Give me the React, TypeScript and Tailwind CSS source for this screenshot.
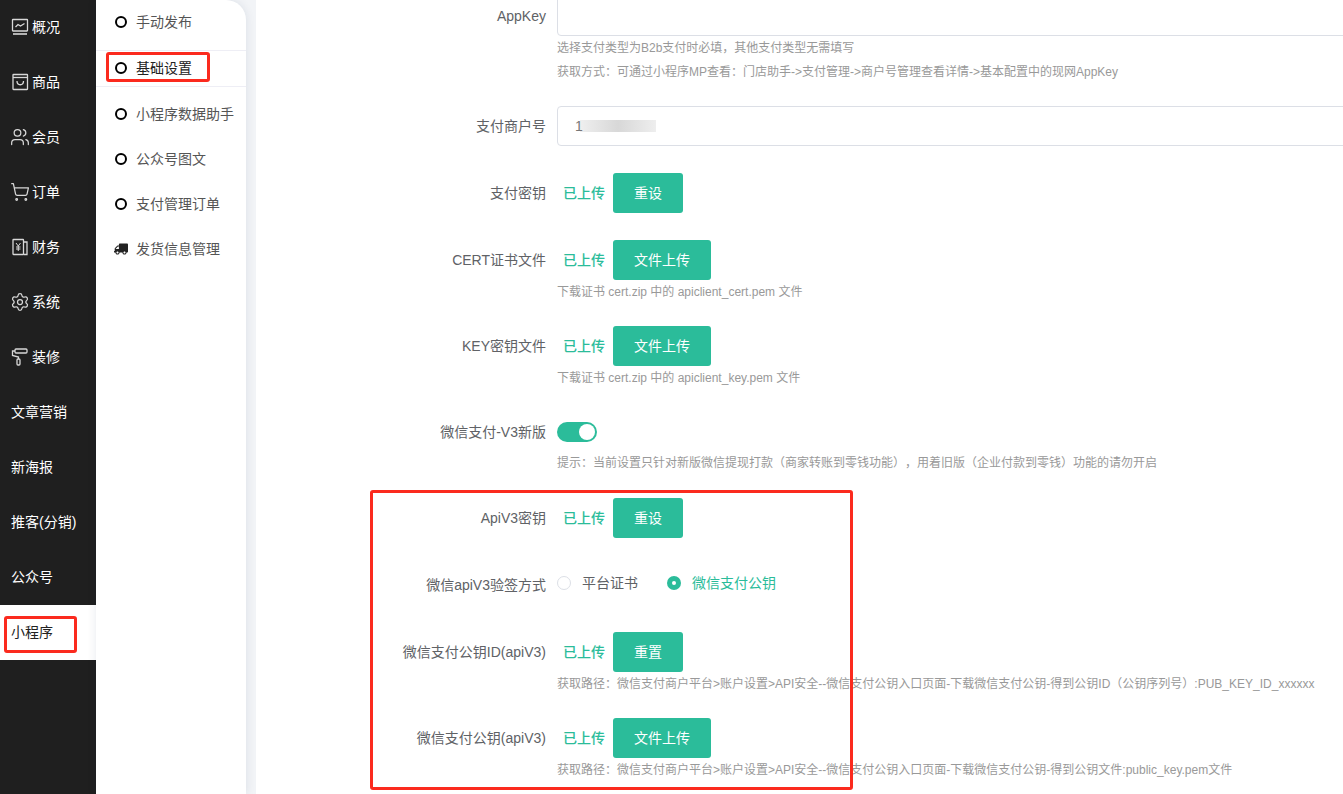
import { ReactNode } from 'react';
import { FaTruck } from 'react-icons/fa';
import { Settings, ShoppingCart, Users } from 'lucide-react';

const iconClass = 'w-[18px] h-[18px] text-[#d8d8d8] shrink-0';
const lucideClass = 'w-5 h-5 -mx-px text-[#d8d8d8] shrink-0';

function ChartIcon() {
  return (
    <svg viewBox="0 0 18 18" className={iconClass} fill="none" stroke="currentColor" strokeWidth="1.3">
      <rect x="1.5" y="1.5" width="15" height="11.5" rx="0.5" />
      <path d="M4.5 9l2.5-2.5 2.5 1.5 4-2.5" />
      <path d="M2 16h14" strokeWidth="1.6" />
    </svg>
  );
}

function BoxIcon() {
  return (
    <svg viewBox="0 0 18 18" className={iconClass} fill="none" stroke="currentColor" strokeWidth="1.3">
      <rect x="2" y="1.5" width="14.5" height="15" rx="0.5" />
      <path d="M2 4.5h14.5" />
      <path d="M6 8c0 5 6.5 5 6.5 0" />
    </svg>
  );
}

function MoneyIcon() {
  return (
    <svg viewBox="0 0 18 18" className={iconClass} fill="none" stroke="currentColor" strokeWidth="1.3">
      <path d="M12.5 4h3.5v12.5h-3.5" />
      <rect x="2" y="1.5" width="10.5" height="15" rx="0.5" />
      <path d="M5 5l2.25 3 2.25-3M7.25 8v5M5 9h4.5M5 11h4.5" strokeWidth="1" />
    </svg>
  );
}

function RollerIcon() {
  return (
    <svg viewBox="0 0 18 18" className={iconClass} fill="none" stroke="currentColor" strokeWidth="1.3">
      <rect x="4" y="1" width="12" height="4" rx="1" />
      <path d="M4 3H1.5v4.5L7.5 9v2" />
      <rect x="6" y="11" width="3" height="6" rx="1" />
    </svg>
  );
}

const mainNav: { label: string; icon?: ReactNode; active?: boolean }[] = [
  { label: '概况', icon: <ChartIcon /> },
  { label: '商品', icon: <BoxIcon /> },
  { label: '会员', icon: <Users className={lucideClass} strokeWidth={1.5} /> },
  { label: '订单', icon: <ShoppingCart className={lucideClass} strokeWidth={1.5} /> },
  { label: '财务', icon: <MoneyIcon /> },
  { label: '系统', icon: <Settings className={lucideClass} strokeWidth={1.5} /> },
  { label: '装修', icon: <RollerIcon /> },
  { label: '文章营销' },
  { label: '新海报' },
  { label: '推客(分销)' },
  { label: '公众号' },
  { label: '小程序', active: true },
];

function Uploaded({ text }: { text: string }) {
  return (
    <div className="flex items-center">
      <span className="text-[#2bbc9a] text-sm font-medium mr-[8px] ml-[6px]">已上传</span>
      <button
        className={`h-10 bg-[#2bbc9a] text-white text-sm rounded-[3px] ${
          text === '文件上传' ? 'w-[98px]' : 'w-[70px]'
        }`}
      >
        {text}
      </button>
    </div>
  );
}

function Row({ label, children, className = '' }: { label: string; children: ReactNode; className?: string }) {
  return (
    <div className={`flex items-center ${className}`}>
      <label className="w-[301px] pr-[11px] text-right text-sm text-[#606266] shrink-0">{label}</label>
      <div className="flex-1 min-w-0">{children}</div>
    </div>
  );
}

function Hint({ children, className = '' }: { children: ReactNode; className?: string }) {
  return <p className={`ml-[301px] text-xs leading-6 text-[#999] whitespace-nowrap ${className}`}>{children}</p>;
}

function SubItem({ name, active }: { name: string; active?: boolean }) {
  return (
    <div
      className={`flex items-center pl-[19px] gap-[9px] ${
        active ? 'h-[37px] my-[5px] pb-[2px] border-y border-[#eeeef5] text-[#222]' : 'h-[45px] pb-[2px]'
      }`}
    >
      <span className="w-3 h-3 rounded-full border-2 border-black shrink-0" />
      {name}
    </div>
  );
}

export default function App() {
  return (
    <div
      className="relative flex h-[794px] overflow-hidden bg-[#f2f4f7] [text-spacing-trim:space-all]"
      style={{ fontFamily: '"Liberation Sans", "Noto Sans CJK SC", sans-serif' }}
    >
      {/* 一级菜单 */}
      <aside className="w-24 shrink-0 bg-[#1f1f1f] text-sm">
        {mainNav.map((item) => (
          <div
            key={item.label}
            className={`h-[55px] flex items-center pl-[11px] pb-[2px] gap-[3px] ${
              item.active ? 'bg-white text-[#222]' : 'text-white'
            }`}
          >
            {item.icon}
            <span>{item.label}</span>
          </div>
        ))}
      </aside>

      {/* 二级菜单 */}
      <aside className="w-[150px] shrink-0 bg-white rounded-tr-[20px] text-sm text-[#555] z-10 shadow-[0_0_10px_rgba(20,40,80,0.1)]">
        <SubItem name="手动发布" />
        <SubItem name="基础设置" active />
        <SubItem name="小程序数据助手" />
        <SubItem name="公众号图文" />
        <SubItem name="支付管理订单" />
        <div className="flex items-center pl-[18px] gap-[8px] h-[45px] pb-[2px]">
          <FaTruck className="w-[14px] h-[14px] text-[#222] -scale-x-100" />
          发货信息管理
        </div>
      </aside>

      {/* 内容 */}
      <main className="flex-1 min-w-0 ml-[10px] bg-white -mt-[4px]">
        <Row label="AppKey">
          <div className="h-10 border border-[#dcdfe6] rounded-[4px] -mr-[10px]" />
        </Row>
        <Hint>选择支付类型为B2b支付时必填，其他支付类型无需填写</Hint>
        <Hint>获取方式：可通过小程序MP查看：门店助手-&gt;支付管理-&gt;商户号管理查看详情-&gt;基本配置中的现网AppKey</Hint>

        <Row label="支付商户号" className="mt-[22px]">
          <div className="h-10 border border-[#dcdfe6] rounded-[4px] -mr-[10px] flex items-center pl-[17px] text-sm text-[#777]">
            <span className="relative z-10">1</span>
            <span className="-ml-[3px] w-[76px] h-[12px] bg-linear-to-r from-[#efefef] via-[#d8d8d8] to-[#eeeeee]" />
          </div>
        </Row>

        <Row label="支付密钥" className="mt-[27px]">
          <Uploaded text="重设" />
        </Row>

        <Row label="CERT证书文件" className="mt-[27px]">
          <Uploaded text="文件上传" />
        </Row>
        <Hint>下载证书 cert.zip 中的 apiclient_cert.pem 文件</Hint>

        <Row label="KEY密钥文件" className="mt-[22px]">
          <Uploaded text="文件上传" />
        </Row>
        <Hint>下载证书 cert.zip 中的 apiclient_key.pem 文件</Hint>

        <Row label="微信支付-V3新版" className="mt-[32px]">
          <div className="w-10 h-5 rounded-full bg-[#2bbc9a] relative">
            <span className="absolute right-[2px] top-[2px] w-4 h-4 rounded-full bg-white" />
          </div>
        </Row>
        <Hint className="mt-[9px]">提示：当前设置只针对新版微信提现打款（商家转账到零钱功能），用着旧版（企业付款到零钱）功能的请勿开启</Hint>

        <Row label="ApiV3密钥" className="mt-[23px]">
          <Uploaded text="重设" />
        </Row>

        <Row label="微信apiV3验签方式" className="mt-[35px]">
          <div className="flex items-center text-sm mb-1">
            <span className="w-[14px] h-[14px] rounded-full border border-[#dcdfe6]" />
            <span className="ml-[11px] text-[#606266]">平台证书</span>
            <span className="ml-[29px] w-[14px] h-[14px] rounded-full bg-[#2bbc9a] flex items-center justify-center">
              <span className="w-1 h-1 rounded-full bg-white" />
            </span>
            <span className="ml-[11px] text-[#2bbc9a]">微信支付公钥</span>
          </div>
        </Row>

        <Row label="微信支付公钥ID(apiV3)" className="mt-[35px]">
          <Uploaded text="重置" />
        </Row>
        <Hint>获取路径：微信支付商户平台&gt;账户设置&gt;API安全--微信支付公钥入口页面-下载微信支付公钥-得到公钥ID（公钥序列号）:PUB_KEY_ID_xxxxxx</Hint>

        <Row label="微信支付公钥(apiV3)" className="mt-[22px]">
          <Uploaded text="文件上传" />
        </Row>
        <Hint>获取路径：微信支付商户平台&gt;账户设置&gt;API安全--微信支付公钥入口页面-下载微信支付公钥-得到公钥文件:public_key.pem文件</Hint>
      </main>

      {/* 红框标注 */}
      <div className="absolute z-20 left-[4px] top-[616px] w-[73px] h-[37px] border-[3px] border-[#fb2a1e] rounded-[3px]" />
      <div className="absolute z-20 left-[106px] top-[52px] w-[104px] h-[30px] border-[3px] border-[#fb2a1e] rounded-[3px]" />
      <div className="absolute z-20 left-[370px] top-[490px] w-[483px] h-[300px] border-[3px] border-[#fb2a1e] rounded-[3px]" />
    </div>
  );
}
